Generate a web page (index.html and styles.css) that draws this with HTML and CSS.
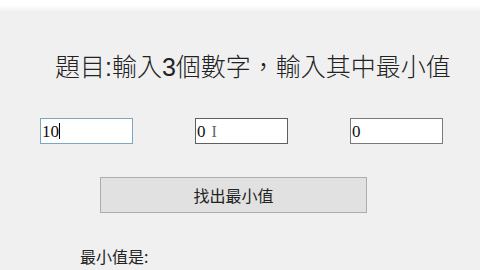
FILE: index.html
```html
<!DOCTYPE html>
<html lang="zh-Hant">
<head>
    <meta charset="UTF-8">
    <title>最小值</title>
    <link rel="stylesheet" href="styles.css">
</head>
<body>
    <div class="titlebar"></div>
    <div class="form">
        <h1 class="question">題目:輸入3個數字，輸入其中最小值</h1>
        <div class="inputs">
            <div class="textbox focused">10<span class="caret"></span></div>
            <div class="textbox hover">0<span class="ibeam">I</span></div>
            <div class="textbox">0</div>
        </div>
        <div class="actions">
            <button class="find">找出最小值</button>
        </div>
        <p class="result">最小值是:</p>
    </div>
</body>
</html>
```

FILE: styles.css
```css
body {
    margin: 0;
    background: #f0f0f0;
    font-family: "Liberation Sans", "Noto Sans CJK TC", sans-serif;
    color: #1a1a1a;
    overflow: hidden;
}
.titlebar {
    height: 12px;
    background: linear-gradient(#ffffff 0, #ffffff 5px, #f0f0f0 12px);
}
.form {
    display: flex;
    flex-direction: column;
}
.question {
    margin: 38px 0 0 55px;
    font-size: 25px;
    font-weight: 300;
    line-height: 34px;
    letter-spacing: 0;
    color: #222;
}
.inputs {
    display: flex;
    gap: 62px;
    margin: 34px 0 0 40px;
}
.textbox {
    box-sizing: border-box;
    width: 93px;
    height: 26px;
    padding: 3px 1px 0;
    background: #fff;
    border: 1px solid #7a7a7a;
    font-family: "Liberation Serif", "Noto Sans CJK TC", serif;
    font-size: 17px;
    line-height: 19px;
    color: #111;
}
.textbox.focused {
    border-color: #7ea6be;
}
.textbox.hover {
    border-color: #5f5f5f;
}
.caret {
    display: inline-block;
    width: 1px;
    height: 16px;
    vertical-align: -2px;
    background: #000;
}
.ibeam {
    margin-left: 6px;
    color: #666;
    font-size: 16px;
}
.actions {
    margin: 33px 0 0 100px;
}
.find {
    width: 267px;
    height: 36px;
    background: #e1e1e1;
    border: 1px solid #adadad;
    border-radius: 0;
    font-family: "Noto Sans CJK TC", sans-serif;
    font-size: 16px;
    color: #222;
}
.result {
    margin: 33px 0 0 80px;
    font-family: "Noto Sans CJK TC", sans-serif;
    font-size: 16px;
    line-height: 20px;
    color: #222;
}
```
